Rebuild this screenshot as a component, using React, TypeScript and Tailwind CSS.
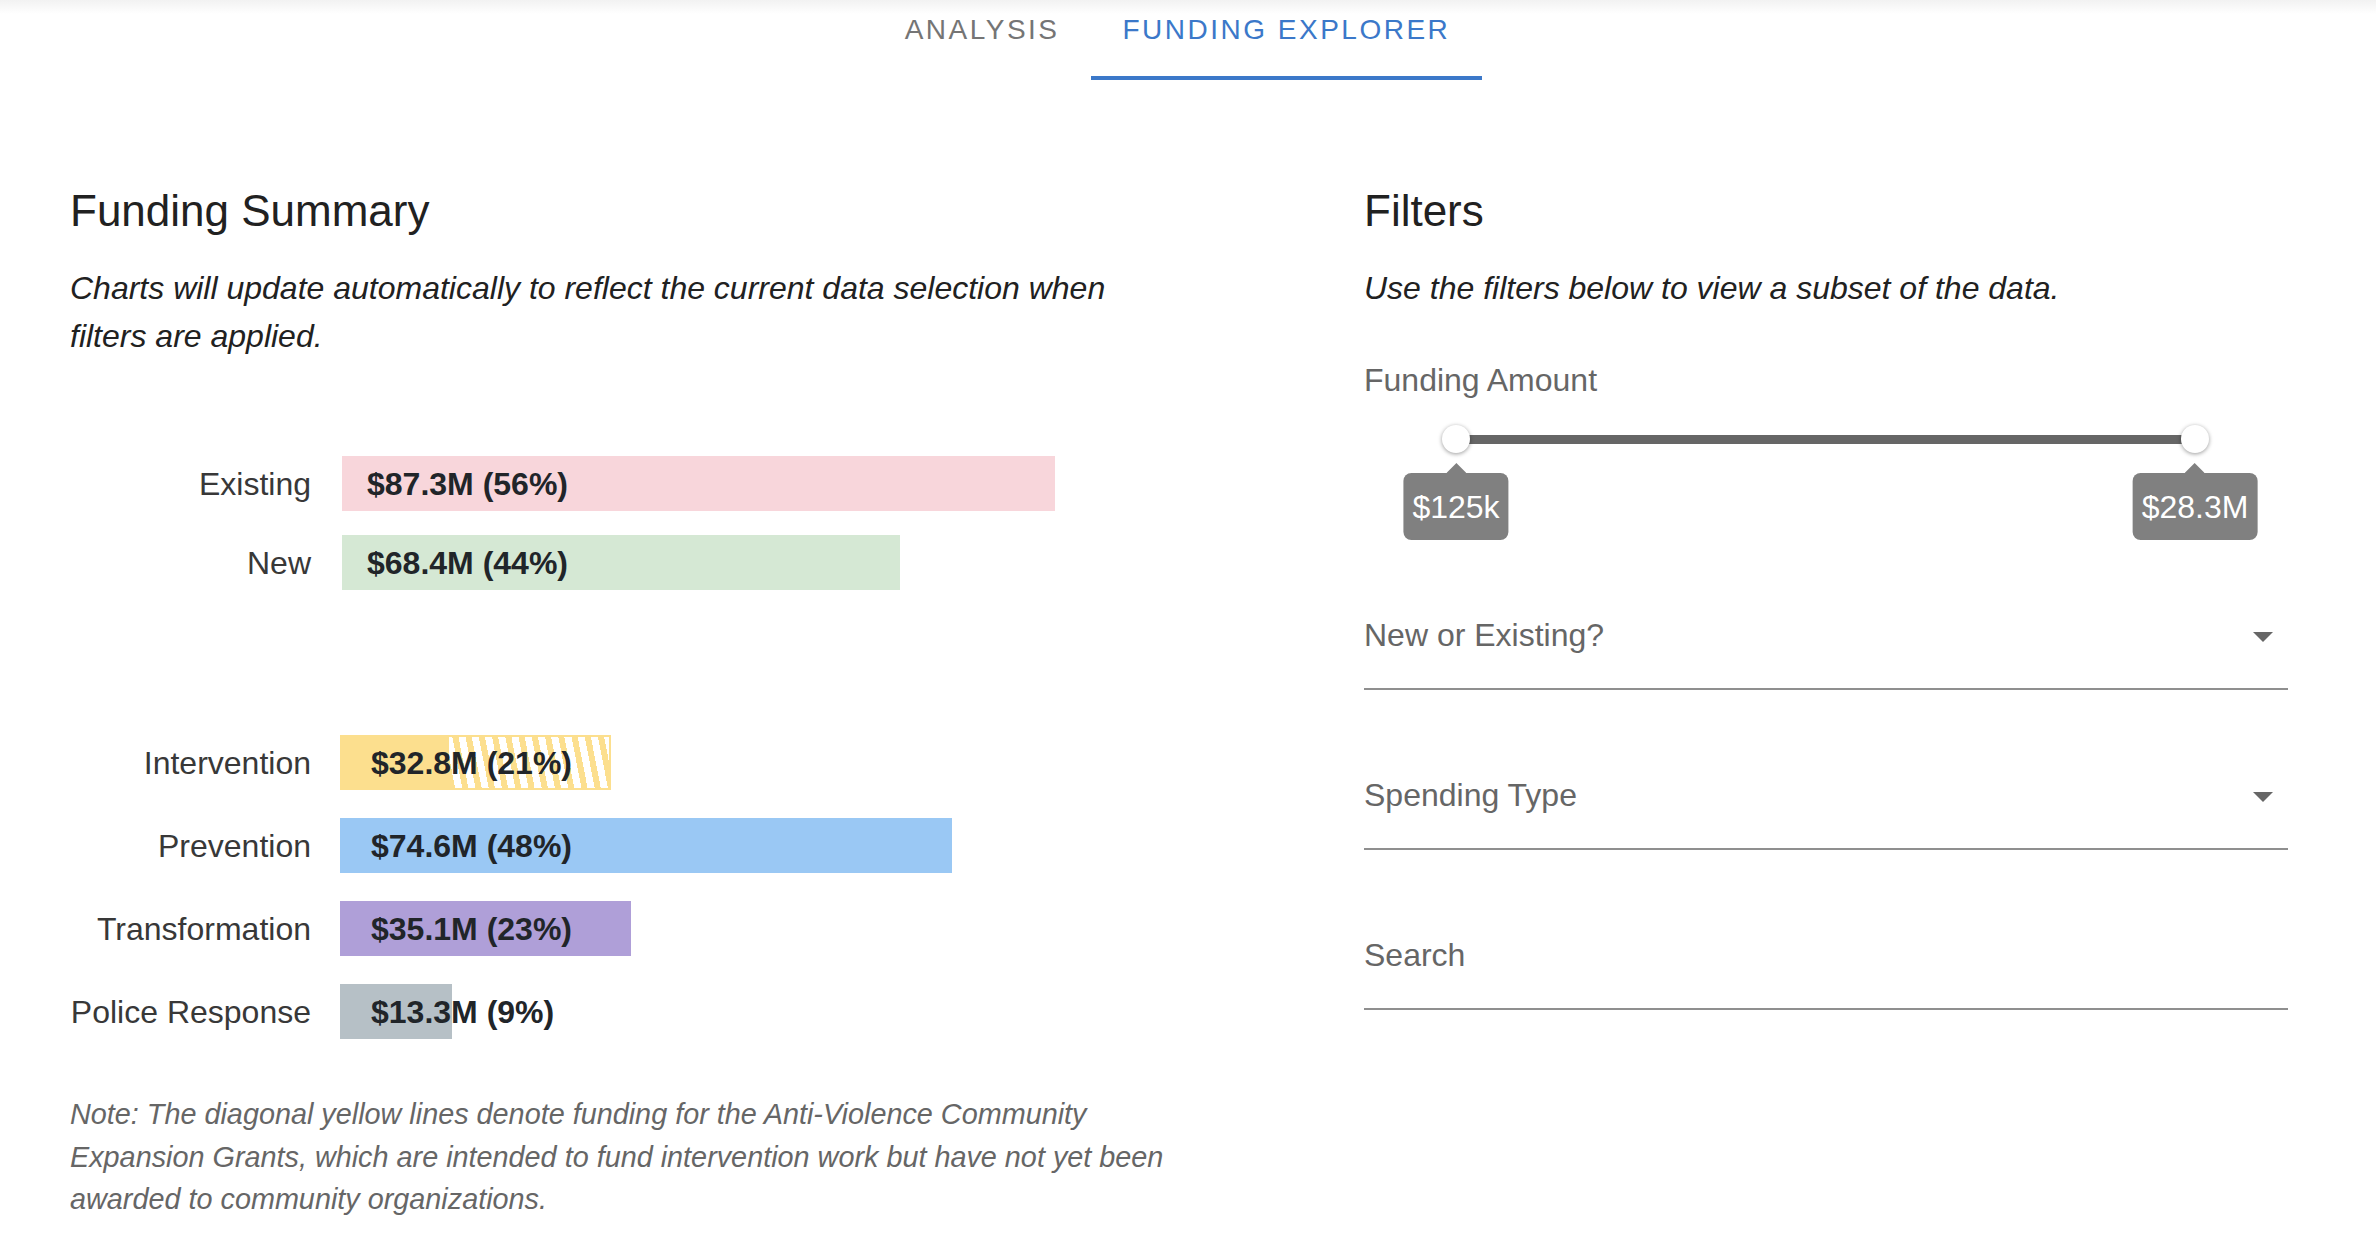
import React from 'react';

const font = "font-['Liberation_Sans',Arial,Helvetica,sans-serif]";

type Bar = {
  label: string;
  value: string;
  width: string;
  color: string;
  hatch?: string;
};

const statusBars: Bar[] = [
  { label: 'Existing', value: '$87.3M (56%)', width: 'w-[713px]', color: 'bg-[#f8d6db]' },
  { label: 'New', value: '$68.4M (44%)', width: 'w-[558px]', color: 'bg-[#d5e8d4]' },
];

const typeBars: Bar[] = [
  {
    label: 'Intervention',
    value: '$32.8M (21%)',
    width: 'w-[109px]',
    color: 'bg-[#fcdf8e]',
    hatch: 'w-[162px]',
  },
  { label: 'Prevention', value: '$74.6M (48%)', width: 'w-[612px]', color: 'bg-[#9ac8f4]' },
  { label: 'Transformation', value: '$35.1M (23%)', width: 'w-[291px]', color: 'bg-[#af9fd8]' },
  { label: 'Police Response', value: '$13.3M (9%)', width: 'w-[112px]', color: 'bg-[#b6c0c6]' },
];

function BarRow({ bar, gap, textPad }: { bar: Bar; gap: string; textPad: string }) {
  return (
    <div className={`flex items-center ${gap}`}>
      <div className="w-[241px] shrink-0 text-right text-[32px] leading-[40px] text-[#383838]">{bar.label}</div>
      <div className="relative flex h-[55px]">
        <div className={`${bar.width} h-full ${bar.color}`} />
        {bar.hatch && (
          <div
            className={`${bar.hatch} h-full border-2 border-l-0 border-[#fcdf8e] bg-[repeating-linear-gradient(79deg,#fcdf8e_0px,#fcdf8e_6px,#ffffff_6px,#ffffff_13px)]`}
          />
        )}
        <div
          className={`absolute inset-y-0 left-0 flex items-center whitespace-nowrap ${textPad} text-[32px] font-bold text-[#212529]`}
        >
          {bar.value}
        </div>
      </div>
    </div>
  );
}

function Heading({ children }: { children: React.ReactNode }) {
  return <h2 className="text-[44px] leading-[52px] text-[#212121]">{children}</h2>;
}

function Intro({ children }: { children: React.ReactNode }) {
  return <p className="mt-[27px] text-[32px] italic leading-[48px] text-[#212121]">{children}</p>;
}

function Field({ label, select }: { label: string; select?: boolean }) {
  return (
    <div className="flex h-[160px] items-end border-b-2 border-[#8f8f8f] pb-[29px]">
      <div className="flex h-[48px] flex-1 items-center justify-between">
        <span className="text-[32px] leading-[48px] text-[#666666]">{label}</span>
        {select && (
          <svg width="20" height="10" viewBox="0 0 20 10" className="mr-[15px] mt-[4px]">
            <path d="M0 0H20L10 10Z" fill="#666666" />
          </svg>
        )}
      </div>
    </div>
  );
}

function ValueLabel({ text }: { text: string }) {
  return (
    <div className="flex flex-col items-center">
      <svg width="20" height="10" viewBox="0 0 20 10" className="block">
        <path d="M0 10L10 0L20 10Z" fill="#808080" />
      </svg>
      <div className="flex h-[67px] items-center rounded-[8px] bg-[#808080] px-[9px] text-[32px] leading-none text-white">
        {text}
      </div>
    </div>
  );
}

function RangeSlider() {
  return (
    <div className="ml-[92px] mt-[21px] h-[105px] w-[739px]">
      <div className="relative h-[28px]">
        <div className="absolute inset-x-0 top-[10px] h-[9px] bg-[#666666]" />
        <div className="absolute left-[-14px] top-0 h-[28px] w-[28px] rounded-full bg-white shadow-[0_1px_4px_rgba(0,0,0,0.4)]" />
        <div className="absolute right-[-14px] top-0 h-[28px] w-[28px] rounded-full bg-white shadow-[0_1px_4px_rgba(0,0,0,0.4)]" />
        <div className="absolute left-0 top-[38px] -translate-x-1/2">
          <ValueLabel text="$125k" />
        </div>
        <div className="absolute left-full top-[38px] -translate-x-1/2">
          <ValueLabel text="$28.3M" />
        </div>
      </div>
    </div>
  );
}

export default function App() {
  return (
    <div className={`min-h-screen bg-white ${font}`}>
      <nav className="flex h-[80px] justify-center pr-[20px] bg-[linear-gradient(to_bottom,#f2f2f2,#ffffff_14px)]">
        <div className="h-full border-b-4 border-transparent px-[31px] pt-[12px] text-[28px] uppercase leading-[36px] tracking-[2.5px] text-[#757575]">
          Analysis
        </div>
        <div className="h-full border-b-4 border-[#3b78c9] px-[32px] pt-[12px] text-[28px] uppercase leading-[36px] tracking-[2.5px] text-[#3b78c9]">
          Funding Explorer
        </div>
      </nav>

      <main className="flex pl-[70px] pt-[105px]">
        <section className="w-[1110px] shrink-0">
          <Heading>Funding Summary</Heading>
          <Intro>
            Charts will update automatically to reflect the current data selection when filters are applied.
          </Intro>

          <div className="mt-[96px] flex flex-col gap-[24px]">
            {statusBars.map((bar) => (
              <BarRow key={bar.label} bar={bar} gap="gap-[31px]" textPad="pl-[25px]" />
            ))}
          </div>

          <div className="mt-[145px] flex flex-col gap-[28px]">
            {typeBars.map((bar) => (
              <BarRow key={bar.label} bar={bar} gap="gap-[29px]" textPad="pl-[31px]" />
            ))}
          </div>

          <p className="mt-[54px] text-[28.8px] italic leading-[42.5px] text-[#666666]">
            Note: The diagonal yellow lines denote funding for the Anti-Violence Community Expansion Grants, which
            are intended to fund intervention work but have not yet been awarded to community organizations.
          </p>
        </section>

        <section className="ml-[184px] w-[924px] shrink-0">
          <Heading>Filters</Heading>
          <Intro>Use the filters below to view a subset of the data.</Intro>

          <div className="mt-[44px] text-[32px] leading-[48px] text-[#666666]">Funding Amount</div>
          <RangeSlider />

          <div>
            <Field label="New or Existing?" select />
            <Field label="Spending Type" select />
            <Field label="Search" />
          </div>
        </section>
      </main>
    </div>
  );
}
